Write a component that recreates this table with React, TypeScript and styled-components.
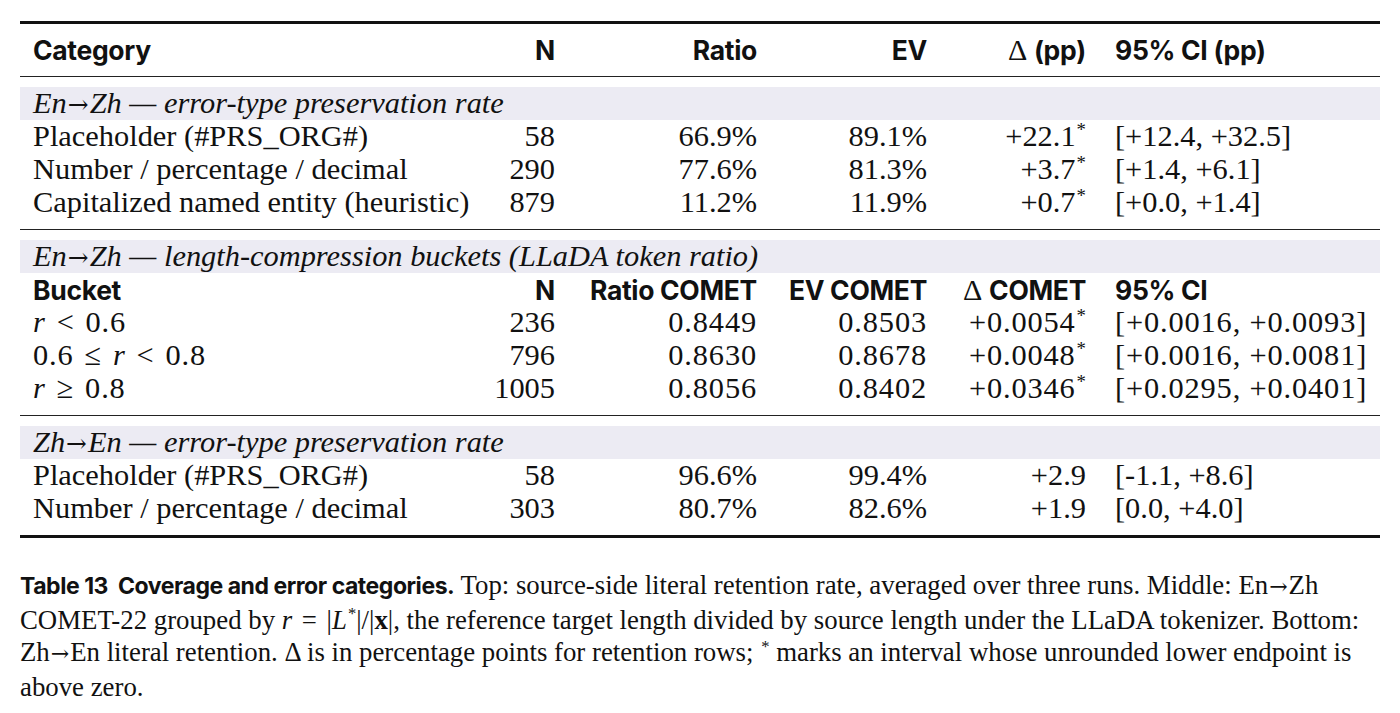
import React from 'react';
import styled, { createGlobalStyle } from 'styled-components';

const GlobalStyle = createGlobalStyle`
  body {
    margin: 0;
    background: #fff;
    color: #111;
    font-family: 'Liberation Serif', 'Times New Roman', serif;
  }
`;

const Page = styled.div`
  padding: 21px 20px 0 20px;
`;

const Table = styled.div`
  border-top: 3px solid #111;
  border-bottom: 3px solid #111;
`;

const cols = '437px 85px 202px 170px 159px 1fr';

const HeadRow = styled.div`
  display: grid;
  grid-template-columns: ${cols};
  align-items: center;
  height: 52px;
  padding-left: 13px;
  border-bottom: 1.5px solid #222;
`;

const Row = styled.div`
  display: grid;
  grid-template-columns: ${cols};
  align-items: center;
  height: 33px;
  padding-left: 13px;
  font-size: 30.4px;
  line-height: 33px;
`;

const Section = styled.div<{ $last?: boolean }>`
  padding: 10px 0;
  border-bottom: ${p => (p.$last ? 'none' : '1.5px solid #222')};
`;

const Band = styled.div`
  background: #ecebf3;
  height: 33px;
  line-height: 33px;
  padding-left: 13px;
  font-style: italic;
  font-size: 30.4px;
  white-space: nowrap;
`;

const Head = styled.div<{ $right?: boolean; $ci?: boolean }>`
  font-family: Inter, 'Noto Sans', sans-serif;
  font-weight: 700;
  font-size: 26.5px;
  letter-spacing: -0.012em;
  text-align: ${p => (p.$right ? 'right' : 'left')};
  padding-left: ${p => (p.$ci ? '29px' : '0')};
  white-space: nowrap;
`;

const Delta = styled.span`
  font-family: 'Liberation Serif', serif;
  font-weight: 400;
  font-size: 30px;
  margin-right: 7px;
`;

const Cell = styled.div<{ $right?: boolean; $ci?: boolean; $math?: boolean }>`
  text-align: ${p => (p.$right ? 'right' : 'left')};
  padding-left: ${p => (p.$ci ? '29px' : '0')};
  letter-spacing: ${p => (p.$math ? '0.028em' : '0')};
  white-space: nowrap;
`;

const Star = styled.span`
  font-size: 0.62em;
  line-height: 0;
  vertical-align: 0.55em;
  letter-spacing: 0;
  margin-left: 1px;
`;

const Arrow = styled.span`
  font-family: 'DejaVu Serif', serif;
  font-style: normal;
  font-size: 0.82em;
  margin: 0 1px;
`;

const Var = styled.i`
  font-style: italic;
`;

const Rel = styled.span`
  margin: 0 0.36em;
`;

const Caption = styled.div`
  margin-top: 31px;
  font-size: 26.8px;
  line-height: 32.5px;
`;

const Line = styled.div`
  white-space: nowrap;
`;

const Label = styled.b`
  font-family: Inter, 'Noto Sans', sans-serif;
  font-weight: 700;
  font-size: 23px;
  letter-spacing: -0.02em;
`;

const Bold = styled.b`
  font-weight: 700;
`;

type Line3 = { name: React.ReactNode; n: string; a: string; b: string; d: string; star?: boolean; ci: string };

const Data = ({ r, math }: { r: Line3; math?: boolean }) => (
  <Row>
    <Cell $math={math}>{r.name}</Cell>
    <Cell $right>{r.n}</Cell>
    <Cell $right $math={math}>{r.a}</Cell>
    <Cell $right $math={math}>{r.b}</Cell>
    <Cell $right $math={math}>
      {r.d}
      {r.star && <Star>*</Star>}
    </Cell>
    <Cell $ci $math={math}>{r.ci}</Cell>
  </Row>
);

const top: Line3[] = [
  { name: 'Placeholder (#PRS_ORG#)', n: '58', a: '66.9%', b: '89.1%', d: '+22.1', star: true, ci: '[+12.4, +32.5]' },
  { name: 'Number / percentage / decimal', n: '290', a: '77.6%', b: '81.3%', d: '+3.7', star: true, ci: '[+1.4, +6.1]' },
  { name: 'Capitalized named entity (heuristic)', n: '879', a: '11.2%', b: '11.9%', d: '+0.7', star: true, ci: '[+0.0, +1.4]' },
];

const mid: Line3[] = [
  {
    name: (<><Var>r</Var><Rel>&lt;</Rel>0.6</>),
    n: '236', a: '0.8449', b: '0.8503', d: '+0.0054', star: true, ci: '[+0.0016, +0.0093]',
  },
  {
    name: (<>0.6<Rel>≤</Rel><Var>r</Var><Rel>&lt;</Rel>0.8</>),
    n: '796', a: '0.8630', b: '0.8678', d: '+0.0048', star: true, ci: '[+0.0016, +0.0081]',
  },
  {
    name: (<><Var>r</Var><Rel>≥</Rel>0.8</>),
    n: '1005', a: '0.8056', b: '0.8402', d: '+0.0346', star: true, ci: '[+0.0295, +0.0401]',
  },
];

const bottom: Line3[] = [
  { name: 'Placeholder (#PRS_ORG#)', n: '58', a: '96.6%', b: '99.4%', d: '+2.9', ci: '[-1.1, +8.6]' },
  { name: 'Number / percentage / decimal', n: '303', a: '80.7%', b: '82.6%', d: '+1.9', ci: '[0.0, +4.0]' },
];

export default function App() {
  return (
    <Page>
      <GlobalStyle />
      <Table>
        <HeadRow>
          <Head>Category</Head>
          <Head $right>N</Head>
          <Head $right>Ratio</Head>
          <Head $right>EV</Head>
          <Head $right><Delta>Δ</Delta>(pp)</Head>
          <Head $ci>95% CI (pp)</Head>
        </HeadRow>

        <Section>
          <Band>En<Arrow>→</Arrow>Zh — error-type preservation rate</Band>
          {top.map((r, i) => <Data key={i} r={r} />)}
        </Section>

        <Section>
          <Band>En<Arrow>→</Arrow>Zh — length-compression buckets (LLaDA token ratio)</Band>
          <Row>
            <Head>Bucket</Head>
            <Head $right>N</Head>
            <Head $right>Ratio COMET</Head>
            <Head $right>EV COMET</Head>
            <Head $right><Delta>Δ</Delta>COMET</Head>
            <Head $ci>95% CI</Head>
          </Row>
          {mid.map((r, i) => <Data key={i} r={r} math />)}
        </Section>

        <Section $last>
          <Band>Zh<Arrow>→</Arrow>En — error-type preservation rate</Band>
          {bottom.map((r, i) => <Data key={i} r={r} />)}
        </Section>
      </Table>

      <Caption>
        <Line>
          <Label>Table 13&nbsp;&nbsp;Coverage and error categories.</Label> Top: source-side literal retention rate, averaged over three runs. Middle: En<Arrow>→</Arrow>Zh
        </Line>
        <Line>
          COMET-22 grouped by <Var>r</Var><Rel>=</Rel>|<Var>L</Var><Star>*</Star>|/|<Bold>x</Bold>|, the reference target length divided by source length under the LLaDA tokenizer. Bottom:
        </Line>
        <Line>
          Zh<Arrow>→</Arrow>En literal retention. Δ is in percentage points for retention rows; <Star>*</Star> marks an interval whose unrounded lower endpoint is
        </Line>
        <Line>above zero.</Line>
      </Caption>
    </Page>
  );
}
